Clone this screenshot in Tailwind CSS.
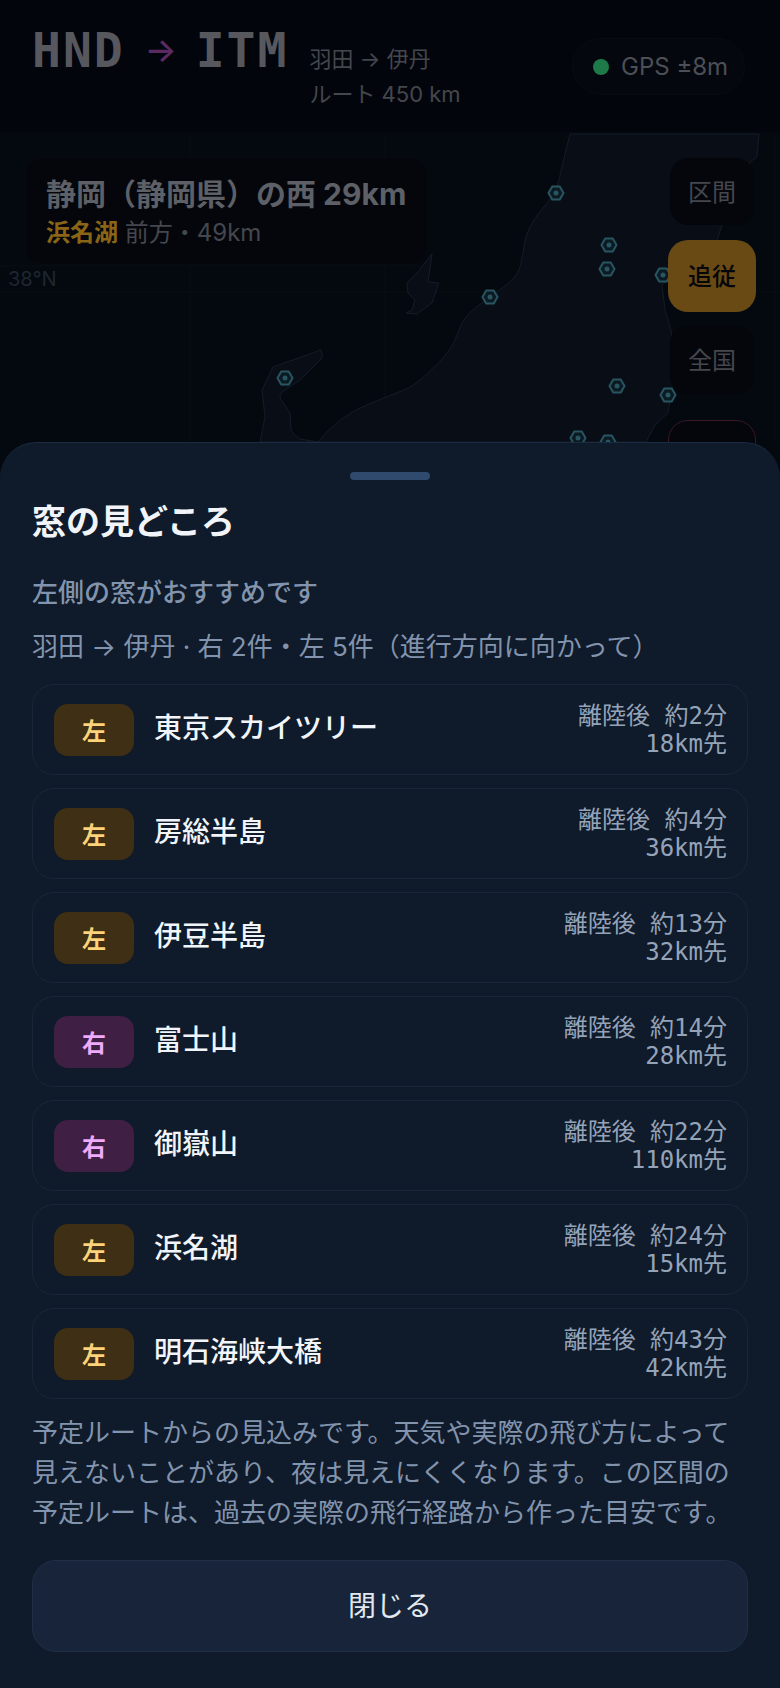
<!DOCTYPE html>
<html lang="ja">
<head>
<meta charset="utf-8">
<script src="https://cdn.jsdelivr.net/npm/@tailwindcss/browser@4"></script>
<title>窓の見どころ</title>
</head>
<body class="bg-[#03050c]">
<div class="relative w-[780px] h-[1688px] overflow-hidden flex flex-col bg-[#03050c] font-['Inter','Noto_Sans_CJK_JP',sans-serif]">
  <header class="h-[133px] shrink-0 flex items-start pl-[32px] pr-[35px] bg-[#03050c] border-b border-[#060a10]">
    <div class="mt-[22px] flex items-center font-['DejaVu_Sans_Mono',monospace] font-bold text-[48px] leading-[56px] tracking-[2px] text-[#56585e]">
      <span>HND</span>
      <span class="w-[71px] pl-[1px] text-center font-['Inter',sans-serif] font-medium text-[34px] tracking-normal text-[#5c2a63]">→</span>
      <span>ITM</span>
    </div>
    <div class="ml-[21px] mt-[42px] text-[22px] leading-[35px] text-[#44474d]">
      <div>羽田 → 伊丹</div>
      <div>ルート 450 km</div>
    </div>
    <div class="ml-auto mt-[38px] h-[57px] w-[173px] rounded-full border border-[#070b12] bg-[#04070e] flex items-center pl-[20px] gap-[12px]">
      <span class="w-[16px] h-[16px] rounded-full bg-[#1f7a4a]"></span>
      <span class="text-[24px] text-[#4c4f55]">GPS ±8m</span>
    </div>
  </header>

  <main class="relative flex-1 bg-[#04090f]">
    <svg class="absolute left-0 top-[-133px]" width="780" height="1688" viewBox="0 0 780 1688" fill="none" stroke-linejoin="round">
      <g stroke="#080e15" stroke-width="1">
        <path d="M0 292H780M0 266H430M190 134V442M385 134V442M580 134V442M775 134V442"/>
      </g>
      <path d="M570 134L566 150Q562 167 559 180Q556 193 541.500 210Q527 227 524.500 243.500Q522 260 519.500 268.500Q517 277 503.500 287Q490 297 476.500 307Q463 317 459 330Q455 343 447.500 352.500Q440 362 426.500 374.500Q413 387 403 390.500Q393 394 365.500 405.500Q338 417 318 442L646 442L655 425L668 413L675 370L671 330L665 310L662 285L717 240L722 225L735 190L750 162L757 157L759 134Z" fill="#090e16" stroke="#141c27" stroke-width="1"/>
      <path d="M321 350Q323 355 322 358L300 380L282 392Q279 396 280 398L290 413L291 430Q294 436 300 439L318 442L260 442L265 417L262 390L273 367Z" fill="#090e16" stroke="#141c27" stroke-width="1"/>
      <path d="M432 254L417 273L407 283L408 293L415 300L412 310L406 313L417 314L432 303L439 283L428 282Z" fill="#090e16" stroke="#141c27" stroke-width="1"/>
      <g stroke="#285562" stroke-width="2" fill="#0c1a22">
        <path d="M548.500 193L552.250 186.500L559.750 186.500L563.500 193L559.750 199.500L552.250 199.500Z"/>
        <path d="M601.500 245L605.250 238.500L612.750 238.500L616.500 245L612.750 251.500L605.250 251.500Z"/>
        <path d="M599.500 269L603.250 262.500L610.750 262.500L614.500 269L610.750 275.500L603.250 275.500Z"/>
        <path d="M655.500 275L659.250 268.500L666.750 268.500L670.500 275L666.750 281.500L659.250 281.500Z"/>
        <path d="M482.500 297L486.250 290.500L493.750 290.500L497.500 297L493.750 303.500L486.250 303.500Z"/>
        <path d="M277.500 378L281.250 371.500L288.750 371.500L292.500 378L288.750 384.500L281.250 384.500Z"/>
        <path d="M609.500 386L613.250 379.500L620.750 379.500L624.500 386L620.750 392.500L613.250 392.500Z"/>
        <path d="M660.500 395L664.250 388.500L671.750 388.500L675.500 395L671.750 401.500L664.250 401.500Z"/>
        <path d="M570.500 438L574.250 431.500L581.750 431.500L585.500 438L581.750 444.500L574.250 444.500Z"/>
        <path d="M600.500 442L604.250 435.500L611.750 435.500L615.500 442L611.750 448.500L604.250 448.500Z"/>
      </g>
      <g fill="#285562">
        <circle cx="556" cy="193" r="2.500"/><circle cx="609" cy="245" r="2.500"/><circle cx="607" cy="269" r="2.500"/><circle cx="663" cy="275" r="2.500"/><circle cx="490" cy="297" r="2.500"/><circle cx="285" cy="378" r="2.500"/><circle cx="617" cy="386" r="2.500"/><circle cx="668" cy="395" r="2.500"/><circle cx="578" cy="438" r="2.500"/><circle cx="608" cy="442" r="2.500"/>
      </g>
    </svg>

    <div class="absolute left-[8px] top-[133px] text-[20px] leading-[26px] text-[#1f262f]">38°N</div>

    <div class="absolute left-[25px] top-[24px] w-[403px] h-[108px] rounded-[16px] bg-[#04060c] border border-[#070b11] pl-[20px] pt-[15px]">
      <div class="text-[30px] leading-[42px] font-bold text-[#5d6067]">静岡（静岡県）の西 29km</div>
      <div class="text-[24px] leading-[32px] mt-[2px] text-[#44474d]"><span class="font-bold text-[#8a6516]">浜名湖</span> 前方・49km</div>
    </div>

    <div class="absolute right-[24px] top-[25px] w-[88px] flex flex-col items-center">
      <div class="w-[84px] h-[67px] mb-[15px] pt-[2px] rounded-[18px] bg-[#04060c] flex items-center justify-center text-[24px] text-[#44474d]">区間</div>
      <div class="w-[88px] h-[72px] mb-[13px] pt-[2px] rounded-[20px] bg-[#694a14] flex items-center justify-center text-[24px] font-medium text-[#05060a]">追従</div>
      <div class="w-[84px] h-[70px] mb-[25px] pt-[2px] rounded-[18px] bg-[#04060c] flex items-center justify-center text-[24px] text-[#44474d]">全国</div>
      <div class="w-[88px] h-[70px] rounded-[20px] bg-[#04060c] border border-[#3a1824]"></div>
    </div>
  </main>

  <section class="absolute inset-x-0 bottom-0 h-[1246px] rounded-t-[36px] bg-[#0f1a2a] border-t border-[#1b2b42] pt-[29px] px-[32px]">
    <div class="mx-auto w-[80px] h-[8px] rounded-full bg-[#2f4a6d]"></div>
    <h2 class="mt-[20px] text-[34px] leading-[44px] font-bold text-[#f1f5f9]">窓の見どころ</h2>
    <p class="mt-[31px] text-[26px] leading-[36px] font-medium text-[#8294ad]">左側の窓がおすすめです</p>
    <p class="mt-[18px] text-[26px] leading-[36px] text-[#8294ad]">羽田 → 伊丹 · 右 2件・左 5件（進行方向に向かって）</p>

    <ul class="mt-[19px] flex flex-col gap-[13px]">
      <li class="h-[91px] rounded-[22px] border border-[#1a2638] pl-[21px] pr-[20px] flex items-center">
        <span class="w-[80px] h-[52px] pt-[4px] rounded-[14px] bg-[#3f2f14] text-[#fcd27a] text-[24px] font-semibold flex items-center justify-center">左</span>
        <span class="ml-[20px] mb-[4px] text-[28px] font-medium text-[#f1f5f9]">東京スカイツリー</span>
        <span class="ml-auto text-right font-['DejaVu_Sans_Mono','Noto_Sans_CJK_JP',monospace] text-[24px] leading-[28px] text-[#94a3b8]">離陸後 約2分<br>18km先</span>
      </li>
      <li class="h-[91px] rounded-[22px] border border-[#1a2638] pl-[21px] pr-[20px] flex items-center">
        <span class="w-[80px] h-[52px] pt-[4px] rounded-[14px] bg-[#3f2f14] text-[#fcd27a] text-[24px] font-semibold flex items-center justify-center">左</span>
        <span class="ml-[20px] mb-[4px] text-[28px] font-medium text-[#f1f5f9]">房総半島</span>
        <span class="ml-auto text-right font-['DejaVu_Sans_Mono','Noto_Sans_CJK_JP',monospace] text-[24px] leading-[28px] text-[#94a3b8]">離陸後 約4分<br>36km先</span>
      </li>
      <li class="h-[91px] rounded-[22px] border border-[#1a2638] pl-[21px] pr-[20px] flex items-center">
        <span class="w-[80px] h-[52px] pt-[4px] rounded-[14px] bg-[#3f2f14] text-[#fcd27a] text-[24px] font-semibold flex items-center justify-center">左</span>
        <span class="ml-[20px] mb-[4px] text-[28px] font-medium text-[#f1f5f9]">伊豆半島</span>
        <span class="ml-auto text-right font-['DejaVu_Sans_Mono','Noto_Sans_CJK_JP',monospace] text-[24px] leading-[28px] text-[#94a3b8]">離陸後 約13分<br>32km先</span>
      </li>
      <li class="h-[91px] rounded-[22px] border border-[#1a2638] pl-[21px] pr-[20px] flex items-center">
        <span class="w-[80px] h-[52px] pt-[4px] rounded-[14px] bg-[#3f2044] text-[#f0abfc] text-[24px] font-semibold flex items-center justify-center">右</span>
        <span class="ml-[20px] mb-[4px] text-[28px] font-medium text-[#f1f5f9]">富士山</span>
        <span class="ml-auto text-right font-['DejaVu_Sans_Mono','Noto_Sans_CJK_JP',monospace] text-[24px] leading-[28px] text-[#94a3b8]">離陸後 約14分<br>28km先</span>
      </li>
      <li class="h-[91px] rounded-[22px] border border-[#1a2638] pl-[21px] pr-[20px] flex items-center">
        <span class="w-[80px] h-[52px] pt-[4px] rounded-[14px] bg-[#3f2044] text-[#f0abfc] text-[24px] font-semibold flex items-center justify-center">右</span>
        <span class="ml-[20px] mb-[4px] text-[28px] font-medium text-[#f1f5f9]">御嶽山</span>
        <span class="ml-auto text-right font-['DejaVu_Sans_Mono','Noto_Sans_CJK_JP',monospace] text-[24px] leading-[28px] text-[#94a3b8]">離陸後 約22分<br>110km先</span>
      </li>
      <li class="h-[91px] rounded-[22px] border border-[#1a2638] pl-[21px] pr-[20px] flex items-center">
        <span class="w-[80px] h-[52px] pt-[4px] rounded-[14px] bg-[#3f2f14] text-[#fcd27a] text-[24px] font-semibold flex items-center justify-center">左</span>
        <span class="ml-[20px] mb-[4px] text-[28px] font-medium text-[#f1f5f9]">浜名湖</span>
        <span class="ml-auto text-right font-['DejaVu_Sans_Mono','Noto_Sans_CJK_JP',monospace] text-[24px] leading-[28px] text-[#94a3b8]">離陸後 約24分<br>15km先</span>
      </li>
      <li class="h-[91px] rounded-[22px] border border-[#1a2638] pl-[21px] pr-[20px] flex items-center">
        <span class="w-[80px] h-[52px] pt-[4px] rounded-[14px] bg-[#3f2f14] text-[#fcd27a] text-[24px] font-semibold flex items-center justify-center">左</span>
        <span class="ml-[20px] mb-[4px] text-[28px] font-medium text-[#f1f5f9]">明石海峡大橋</span>
        <span class="ml-auto text-right font-['DejaVu_Sans_Mono','Noto_Sans_CJK_JP',monospace] text-[24px] leading-[28px] text-[#94a3b8]">離陸後 約43分<br>42km先</span>
      </li>
    </ul>

    <p class="mt-[14px] text-[26px] leading-[40px] text-[#8294ad]">予定ルートからの見込みです。天気や実際の飛び方によって<br>見えないことがあり、夜は見えにくくなります。この区間の<br>予定ルートは、過去の実際の飛行経路から作った目安です。</p>

    <button class="mt-[27px] w-full h-[92px] rounded-[24px] bg-[#17243a] border border-[#1f2f47] text-[28px] text-[#e2e8f0]">閉じる</button>
  </section>
</div>
</body>
</html>
